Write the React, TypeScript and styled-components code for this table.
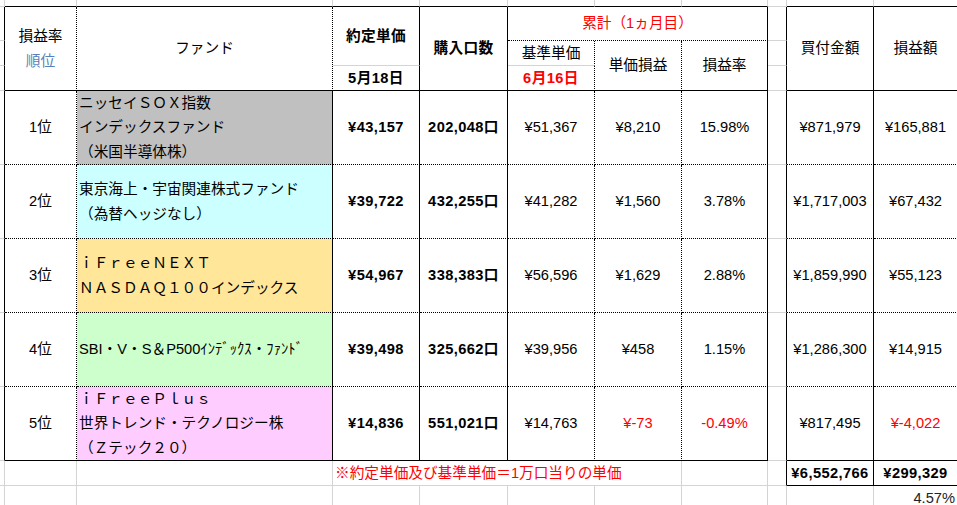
import React from "react";
import styled, { createGlobalStyle } from "styled-components";

type Line = "solid" | "dotted" | "grid";
type Align = "left" | "center" | "right";

const RED = "#ff0000";

const lineStyle = (l: Line) =>
  l === "solid"
    ? "1px solid #000"
    : l === "dotted"
    ? "1px dotted #000"
    : "1px solid #d4d4d4";

const GlobalStyle = createGlobalStyle`
  html, body {
    margin: 0;
    padding: 0;
    background: #fff;
    overflow: hidden;
  }

  body {
    font-family: "Liberation Sans", "Noto Sans CJK JP", sans-serif;
    color: #000;
  }
`;

// columns: edge | rank | fund | price | units | nav | diff | rate | gap | cost | gain
const Sheet = styled.div`
  display: grid;
  grid-template-columns: 5px 72px 256px 87px 88px 87px 87px 86px 19px 87px 84px;
  grid-template-rows: 7px 34px 25px 25px repeat(5, 74px) 25px 25px;
  width: 958px;
  font-size: 14.67px;
`;

interface CellProps {
  $col: number;
  $row: number;
  $cs?: number;
  $rs?: number;
  $r?: Line;
  $b?: Line;
  $bg?: string;
  $align?: Align;
  $tone?: string;
  $bold?: boolean;
}

const Cell = styled.div<CellProps>`
  grid-column: ${(p) => p.$col} / span ${(p) => p.$cs ?? 1};
  grid-row: ${(p) => p.$row} / span ${(p) => p.$rs ?? 1};
  box-sizing: border-box;
  min-width: 0;
  border-right: ${(p) => lineStyle(p.$r ?? "grid")};
  border-bottom: ${(p) => lineStyle(p.$b ?? "grid")};
  background: ${(p) => p.$bg ?? "transparent"};
  display: flex;
  align-items: center;
  justify-content: ${(p) =>
    p.$align === "left"
      ? "flex-start"
      : p.$align === "right"
      ? "flex-end"
      : "center"};
  padding: 0 2px;
  color: ${(p) => p.$tone ?? "#000"};
  font-weight: ${(p) => (p.$bold ? 700 : 400)};
  letter-spacing: ${(p) => (p.$bold ? "0.4px" : "0")};
  white-space: nowrap;
  line-height: 1;
`;

const Stack = styled.div`
  display: flex;
  flex-direction: column;
  align-items: center;
  line-height: 25px;
`;

const Tinted = styled.span<{ $tone: string }>`
  color: ${(p) => p.$tone};
`;

const FundCell = styled(Cell)`
  flex-direction: column;
  align-items: flex-start;
  justify-content: center;
  padding-left: 2px;
  line-height: 24.5px;
`;

interface Fund {
  rank: string;
  name: string[];
  bg: string;
  price: string;
  units: string;
  nav: string;
  diff: string;
  rate: string;
  cost: string;
  gain: string;
  loss?: boolean;
}

const funds: Fund[] = [
  {
    rank: "1位",
    name: ["ニッセイＳＯＸ指数", "インデックスファンド", "（米国半導体株）"],
    bg: "#c0c0c0",
    price: "¥43,157",
    units: "202,048口",
    nav: "¥51,367",
    diff: "¥8,210",
    rate: "15.98%",
    cost: "¥871,979",
    gain: "¥165,881",
  },
  {
    rank: "2位",
    name: ["東京海上・宇宙関連株式ファンド", "（為替ヘッジなし）"],
    bg: "#ccffff",
    price: "¥39,722",
    units: "432,255口",
    nav: "¥41,282",
    diff: "¥1,560",
    rate: "3.78%",
    cost: "¥1,717,003",
    gain: "¥67,432",
  },
  {
    rank: "3位",
    name: ["ｉＦｒｅｅＮＥＸＴ", "ＮＡＳＤＡＱ１００インデックス"],
    bg: "#ffe699",
    price: "¥54,967",
    units: "338,383口",
    nav: "¥56,596",
    diff: "¥1,629",
    rate: "2.88%",
    cost: "¥1,859,990",
    gain: "¥55,123",
  },
  {
    rank: "4位",
    name: ["SBI・V・S＆P500ｲﾝﾃﾞｯｸｽ・ﾌｧﾝﾄﾞ"],
    bg: "#ccffcc",
    price: "¥39,498",
    units: "325,662口",
    nav: "¥39,956",
    diff: "¥458",
    rate: "1.15%",
    cost: "¥1,286,300",
    gain: "¥14,915",
  },
  {
    rank: "5位",
    name: ["ｉＦｒｅｅＰｌｕｓ", "世界トレンド・テクノロジー株", "（Ｚテック２０）"],
    bg: "#ffccff",
    price: "¥14,836",
    units: "551,021口",
    nav: "¥14,763",
    diff: "¥-73",
    rate: "-0.49%",
    cost: "¥817,495",
    gain: "¥-4,022",
    loss: true,
  },
];

// bottom edge of the strip above the table
const topEdge: Line[] = ["grid", "solid", "solid", "solid", "solid", "solid", "solid", "solid", "grid", "solid", "solid"];

function App() {
  return (
    <>
      <GlobalStyle />
      <Sheet>
        {topEdge.map((b, i) => (
          <Cell key={"top" + i} $col={i + 1} $row={1} $b={b} />
        ))}

        {Array.from({ length: 10 }, (_, i) => (
          <Cell key={"edge" + i} $col={1} $row={i + 2} $r={i < 8 ? "solid" : "grid"} />
        ))}

        {/* header */}
        <Cell $col={2} $row={2} $rs={3} $r="dotted" $b="solid">
          <Stack>
            <span>損益率</span>
            <Tinted $tone="#5a7fb8">順位</Tinted>
          </Stack>
        </Cell>
        <Cell $col={3} $row={2} $rs={3} $r="dotted" $b="solid">
          ファンド
        </Cell>
        <Cell $col={4} $row={2} $rs={2} $r="solid" $bold>
          約定単価
        </Cell>
        <Cell $col={4} $row={4} $r="solid" $b="solid" $bold>
          5月18日
        </Cell>
        <Cell $col={5} $row={2} $rs={3} $r="solid" $b="solid" $bold>
          購入口数
        </Cell>
        <Cell $col={6} $row={2} $cs={3} $r="solid" $b="dotted" $tone={RED}>
          累計（1ヵ月目）
        </Cell>
        <Cell $col={6} $row={3} $r="dotted">
          基準単価
        </Cell>
        <Cell $col={6} $row={4} $r="dotted" $b="solid" $tone={RED} $bold>
          6月16日
        </Cell>
        <Cell $col={7} $row={3} $rs={2} $r="dotted" $b="solid">
          単価損益
        </Cell>
        <Cell $col={8} $row={3} $rs={2} $r="solid" $b="solid">
          損益率
        </Cell>
        {[2, 3, 4].map((row) => (
          <Cell key={"gap" + row} $col={9} $row={row} $r="solid" />
        ))}
        <Cell $col={10} $row={2} $rs={3} $r="solid" $b="solid">
          買付金額
        </Cell>
        <Cell $col={11} $row={2} $rs={3} $r="solid" $b="solid">
          損益額
        </Cell>

        {/* funds */}
        {funds.map((f, i) => {
          const row = i + 5;
          const b: Line = i === funds.length - 1 ? "solid" : "dotted";
          const tone = f.loss ? RED : undefined;
          return (
            <React.Fragment key={f.rank}>
              <Cell $col={2} $row={row} $r="dotted" $b={b}>
                {f.rank}
              </Cell>
              <FundCell $col={3} $row={row} $r="solid" $b={b} $bg={f.bg}>
                {f.name.map((n) => (
                  <span key={n}>{n}</span>
                ))}
              </FundCell>
              <Cell $col={4} $row={row} $r="solid" $b={b} $bold>
                {f.price}
              </Cell>
              <Cell $col={5} $row={row} $r="solid" $b={b} $bold>
                {f.units}
              </Cell>
              <Cell $col={6} $row={row} $r="dotted" $b={b}>
                {f.nav}
              </Cell>
              <Cell $col={7} $row={row} $r="dotted" $b={b} $tone={tone}>
                {f.diff}
              </Cell>
              <Cell $col={8} $row={row} $r="solid" $b={b} $tone={tone}>
                {f.rate}
              </Cell>
              <Cell $col={9} $row={row} $r="solid" />
              <Cell $col={10} $row={row} $r="solid" $b={b}>
                {f.cost}
              </Cell>
              <Cell $col={11} $row={row} $r="solid" $b={b} $tone={tone}>
                {f.gain}
              </Cell>
            </React.Fragment>
          );
        })}

        {/* totals */}
        <Cell $col={2} $row={10} />
        <Cell $col={3} $row={10} />
        <Cell $col={4} $row={10} $cs={4} $align="left" $tone={RED}>
          ※約定単価及び基準単価＝1万口当りの単価
        </Cell>
        <Cell $col={8} $row={10} />
        <Cell $col={9} $row={10} $r="solid" />
        <Cell $col={10} $row={10} $r="solid" $b="solid" $bold>
          ¥6,552,766
        </Cell>
        <Cell $col={11} $row={10} $r="solid" $b="solid" $bold>
          ¥299,329
        </Cell>

        {Array.from({ length: 9 }, (_, i) => (
          <Cell key={"last" + i} $col={i + 2} $row={11} />
        ))}
        <Cell $col={11} $row={11} $align="right" $tone="#222">
          4.57%
        </Cell>
      </Sheet>
    </>
  );
}

export default App;
